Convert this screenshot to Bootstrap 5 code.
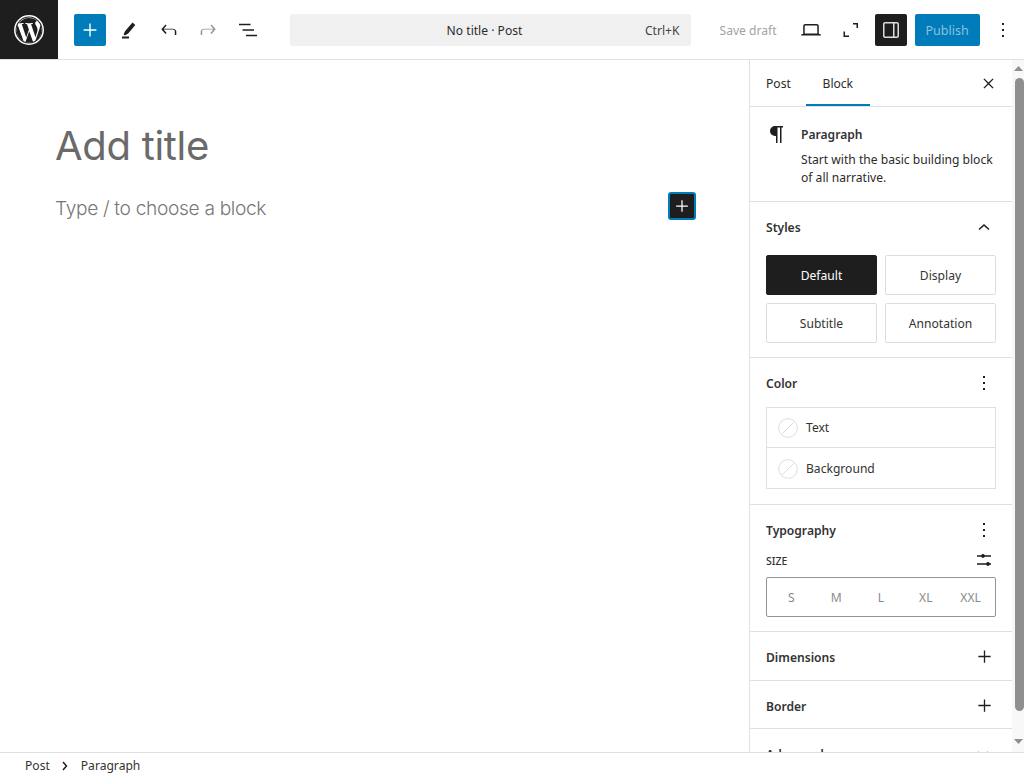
<!DOCTYPE html>
<html lang="en">
<head>
<meta charset="utf-8">
<title>New Post</title>
<link href="https://cdn.jsdelivr.net/npm/bootstrap@5.3.0/dist/css/bootstrap.min.css" rel="stylesheet">
<style>
html,body{height:773px;overflow:hidden}
body{font-family:"Noto Sans","Open Sans",sans-serif;font-size:12.1px;color:#2b2b2b;background:#fff}
.wp-app{height:773px}
.wp-top{height:60px;border-bottom:1px solid #e0e0e0;flex:none}
.wp-logo{width:58px;height:59px;background:#1e1e1e;flex:none}
.ic{width:32px;height:32px;flex:none;border-radius:2px}
.wp-add{background:#007cba;color:#fff;margin-left:16px}
.wp-tools{gap:7.5px;margin-left:7px}
.wp-cmd{width:401px;height:32px;background:#f0f0f0;border-radius:3px;margin-left:26px;padding:3px 11px 0 145px}
.wp-cmd .t{width:100px}
.wp-cmd .k{margin-left:auto;color:#444}
.wp-save{color:#a3a3a3;margin-left:29px;margin-right:18px;padding-top:4px}
.wp-dark{background:#1e1e1e}
.wp-pub{width:65px;height:32px;background:#007cba;color:#8fc0dd;border-radius:2px;margin-left:8px;font-size:12.5px;padding-top:4px}
.wp-dots{margin-left:7px;width:32px}
.wp-main{flex:1 1 0;min-height:0}
.wp-canvas{flex:1 1 0;padding:61px 55px 0;position:relative}
.wp-title{font-family:Inter,sans-serif;font-size:40px;font-weight:400;line-height:50px;color:#6a6a6a;letter-spacing:-.3px;margin:0}
.wp-ph{font-family:Inter,sans-serif;font-size:19.2px;font-weight:300;line-height:28px;color:#777;letter-spacing:-.35px;margin-top:23px}
.wp-inline{position:absolute;left:668px;top:132px;width:28px;height:28px;background:#1e1e1e;border:2px solid #007cba;border-radius:3px}
.wp-side{width:263px;border-left:1px solid #e0e0e0;overflow:hidden;flex:none}
.wp-tabs{height:47px;border-bottom:1px solid #e0e0e0;padding-left:1px;position:relative}
.wp-tab{padding:0 15px;height:46px;line-height:48px}
.wp-tab.on{padding:0 16px 0 16px;width:64px;box-shadow:inset 0 -2px 0 #007cba}
.wp-close{margin-left:auto;margin-right:13px}
.wp-sec{border-bottom:1px solid #e0e0e0;padding:0 16px}
.wp-head{font-weight:600;color:#333}
.wp-blockcard{height:95px;padding:18px 10px 0 16px}
.wp-blockcard svg{flex:none;margin-right:12px;margin-left:-1px;margin-top:-3px}
.wp-blockcard p{margin:0;line-height:18px}
.wp-blockcard .wp-head{margin-bottom:6px;line-height:20px}
.sty{height:156px;padding-top:11px}
.wp-sh{height:32px}
.sty .wp-sh{margin-bottom:11px;margin-top:-1px}
.wp-grid{display:grid;grid-template-columns:111px 111px;gap:8px;width:230px}
.wp-st{height:40px;border:1px solid #ddd;border-radius:2px;color:#333;padding-top:2px}
.wp-st.on{background:#1e1e1e;border-color:#1e1e1e;color:#fff}
.col-sec{height:147px;padding-top:10px}
.col-sec .wp-sh{margin-bottom:7px}
.wp-colbox{border:1px solid #e0e0e0;width:230px}
.wp-colrow{height:39px;padding:1px 0 0 11px;gap:8px;color:#333}
.wp-colrow span{padding-top:1px}
.wp-colrow+.wp-colrow{border-top:1px solid #e0e0e0;height:41px}
.ty-sec{height:127px;padding-top:10px}
.wp-label{font-size:10.5px;font-weight:500;color:#333;height:24px;margin-top:3px}
.wp-seg{width:230px;height:40px;border:1px solid #949494;border-radius:2px;color:#8a8a8a;padding:2px 2px 0;margin-top:3px}
.wp-seg span{flex:1 1 0;text-align:center}
.wp-coll{height:49px;padding:4px 17px 0 16px}
.wp-coll.sm{height:48px;padding-top:5px}
.wp-coll svg{margin-top:-4px}
.wp-scroll{width:12px;flex:none;background:#f8f8f8}
.wp-thumb{height:633px;width:9px;margin-left:3px;background:#8f8f8f;border-radius:5px;margin-top:7px}
.wp-up{height:11px;padding-left:1px}
.wp-down{flex:1 1 0}
.wp-foot{height:21px;border-top:1px solid #e0e0e0;flex:none;padding:5px 0 0 25px;color:#333;background:#fff;line-height:20px;gap:11.5px;position:relative}
</style>
</head>
<body>
<div class="wp-app d-flex flex-column">
  <header class="wp-top d-flex align-items-center">
    <div class="wp-logo d-flex align-items-center justify-content-center">
      <svg width="32" height="32" viewBox="0 0 32 32" fill="none"><circle cx="16" cy="16" r="14.200" fill="none" stroke="#fff" stroke-width="1.500"/><circle cx="16" cy="16" r="12.400" fill="#fff"/><path fill="#1e1e1e" d="M3.600 16c0 4.900 2.900 9.200 7 11.200L4.700 11c-.7 1.500-1.100 3.200-1.100 5zm20.800-.6c0-1.500-.6-2.600-1-3.400-.6-1-1.200-1.800-1.200-2.800 0-1.100.8-2.100 2-2.100h.2A12.400 12.400 0 0 0 6 9.200h.8c1.300 0 3.300-.2 3.300-.2.700 0 .8 1 .1 1.100 0 0-.7.100-1.400.1l4.400 13.200 2.700-8-1.900-5.200c-.7 0-1.300-.1-1.300-.1-.7 0-.6-1.100.1-1.100 0 0 2 .2 3.300.2 1.300 0 3.300-.2 3.300-.2.700 0 .8 1 .1 1.100 0 0-.7.100-1.400.1l4.400 13 1.200-4c.5-1.600.9-2.800.9-3.800zM16.200 17.300l-3.700 10.800a12.400 12.400 0 0 0 7.600-.2l-.1-.2zm10.700-7c.1.400.1.800.1 1.300 0 1.300-.2 2.700-.9 4.400l-3.800 10.900A12.400 12.400 0 0 0 26.900 10.300z"/></svg>
    </div>
    <div class="ic wp-add d-flex align-items-center justify-content-center">
      <svg width="22" height="22" viewBox="0 0 24 24" fill="#fff"><path d="M11.250 5h1.500v6.250H19v1.500h-6.250V19h-1.500v-6.250H5v-1.500h6.250z"/></svg>
    </div>
    <div class="wp-tools d-flex align-items-center">
      <div class="ic d-flex align-items-center justify-content-center"><svg width="24" height="24" viewBox="0 0 24 24" fill="#1e1e1e"><path d="M18.300 6.900 15.500 4.500 8.400 12.800c-.6.700-1.300 2.500-1.600 3.400l-.1.400 1.100.9.400-.2c.9-.4 2.700-1.300 3.200-2zM5 18.600h7v1.800H5z"/></svg></div>
      <div class="ic d-flex align-items-center justify-content-center"><svg width="24" height="24" viewBox="0 0 24 24" fill="#1e1e1e"><path d="M18.300 11.700c-.6-.6-1.400-.9-2.300-.9H6.700l2.900-3.300-1.100-1L4.300 11.200l4.200 4.700 1.100-1-2.900-3.300H16c.5 0 .9.200 1.300.5.300.4.500.8.500 1.300V17h1.500v-3.600c0-.6-.3-1.200-1-1.700z"/></svg></div>
      <div class="ic d-flex align-items-center justify-content-center"><svg width="24" height="24" viewBox="0 0 24 24" fill="#949494"><path d="M15.600 6.500l-1.100 1 2.900 3.300H8c-.9 0-1.700.3-2.300.9-.7.500-1 1.100-1 1.700V17h1.500v-3.600c0-.5.200-.9.500-1.300.4-.3.800-.5 1.300-.5h9.300l-2.900 3.300 1.100 1 4.200-4.700z"/></svg></div>
      <div class="ic d-flex align-items-center justify-content-center"><svg width="24" height="24" viewBox="0 0 24 24" fill="#1e1e1e"><path d="M3 5.800h11.500v1.500H3zM6.500 11.200H18v1.500H6.500zM10 16.700h11v1.500H10z"/></svg></div>
    </div>
    <div class="wp-cmd d-flex align-items-center">
      <span class="t text-center">No title · Post</span>
      <span class="k">Ctrl+K</span>
    </div>
    <span class="wp-save">Save draft</span>
    <div class="ic d-flex align-items-center justify-content-center"><svg width="24" height="24" viewBox="0 0 24 24" fill="#1e1e1e"><path d="M20.500 16h-.7V8c0-1.100-.9-2-2-2H6.200c-1.100 0-2 .9-2 2v8h-.7c-.8 0-1.500.7-1.500 1.500h20c0-.8-.7-1.500-1.500-1.500zM5.700 8c0-.3.200-.5.500-.5h11.600c.3 0 .5.200.5.500v7.600H5.700z"/></svg></div>
    <div class="ic ms-2 d-flex align-items-center justify-content-center"><svg width="24" height="24" viewBox="0 0 24 24" fill="#1e1e1e"><path d="M6 13.500H4.500V19H10v-1.500H6zM14 5v1.500h3.500V10H19V5z"/></svg></div>
    <div class="ic wp-dark ms-2 d-flex align-items-center justify-content-center"><svg width="24" height="24" viewBox="0 0 24 24" fill="#ddd"><path d="M18 4H6c-1.100 0-2 .9-2 2v12c0 1.100.9 2 2 2h12c1.100 0 2-.9 2-2V6c0-1.100-.9-2-2-2zM5.500 18V6c0-.3.200-.5.500-.5h8v13H6c-.3 0-.5-.2-.5-.5zm13 0c0 .3-.2.500-.5.500h-2.500v-13H18c.3 0 .5.200.5.500z"/></svg></div>
    <div class="wp-pub d-flex align-items-center justify-content-center">Publish</div>
    <div class="ic wp-dots d-flex align-items-center justify-content-center"><svg width="24" height="24" viewBox="0 0 24 24" fill="#1e1e1e"><path d="M13 19h-2v-2h2zm0-6h-2v-2h2zm0-6h-2V5h2z"/></svg></div>
  </header>

  <div class="wp-main d-flex">
    <main class="wp-canvas">
      <h1 class="wp-title">Add title</h1>
      <div class="wp-ph">Type / to choose a block</div>
      <div class="wp-inline d-flex align-items-center justify-content-center"><svg width="20" height="20" viewBox="0 0 24 24" fill="#fff"><path d="M11.250 5h1.500v6.250H19v1.500h-6.250V19h-1.500v-6.250H5v-1.500h6.250z"/></svg></div>
    </main>
    <aside class="wp-side">
      <div class="wp-tabs d-flex">
        <div class="wp-tab">Post</div>
        <div class="wp-tab on text-center">Block</div>
        <div class="wp-close d-flex align-items-center"><svg width="21" height="21" viewBox="0 0 24 24" fill="#1e1e1e"><path d="M13.060 12l4.720-4.720-1.060-1.060L12 10.940 7.280 6.220 6.220 7.280 10.940 12l-4.720 4.720 1.060 1.060L12 13.060l4.720 4.720 1.060-1.060z"/></svg></div>
      </div>
      <div class="wp-sec wp-blockcard d-flex">
        <svg width="24" height="24" viewBox="0 0 24 24" fill="#1e1e1e"><path d="M18 4H10a5 5 0 0 0 0 10h1v7h1.500V5.500H15V21h1.500V5.500H18z"/></svg>
        <div><div class="wp-head">Paragraph</div><p>Start with the basic building block of all narrative.</p></div>
      </div>
      <section class="wp-sec sty">
        <div class="wp-sh d-flex align-items-center justify-content-between"><span class="wp-head">Styles</span><svg width="24" height="24" viewBox="0 0 24 24" fill="#1e1e1e"><path d="M6.500 13 12 8l5.500 5-1 1.100L12 10l-4.500 4.100z"/></svg></div>
        <div class="wp-grid">
          <div class="wp-st on d-flex align-items-center justify-content-center">Default</div>
          <div class="wp-st d-flex align-items-center justify-content-center">Display</div>
          <div class="wp-st d-flex align-items-center justify-content-center">Subtitle</div>
          <div class="wp-st d-flex align-items-center justify-content-center">Annotation</div>
        </div>
      </section>
      <section class="wp-sec col-sec">
        <div class="wp-sh d-flex align-items-center justify-content-between"><span class="wp-head">Color</span><svg width="24" height="24" viewBox="0 0 24 24" fill="#1e1e1e"><path d="M13 19h-2v-2h2zm0-6h-2v-2h2zm0-6h-2V5h2z" transform="translate(0 -1)"/></svg></div>
        <div class="wp-colbox">
          <div class="wp-colrow d-flex align-items-center"><svg width="20" height="20" viewBox="0 0 20 20" fill="none" stroke="#ddd"><circle cx="10" cy="10" r="9.300"/><path d="M4 16 16 4"/></svg><span>Text</span></div>
          <div class="wp-colrow d-flex align-items-center"><svg width="20" height="20" viewBox="0 0 20 20" fill="none" stroke="#ddd"><circle cx="10" cy="10" r="9.300"/><path d="M4 16 16 4"/></svg><span>Background</span></div>
        </div>
      </section>
      <section class="wp-sec ty-sec">
        <div class="wp-sh d-flex align-items-center justify-content-between"><span class="wp-head">Typography</span><svg width="24" height="24" viewBox="0 0 24 24" fill="#1e1e1e"><path d="M13 19h-2v-2h2zm0-6h-2v-2h2zm0-6h-2V5h2z" transform="translate(0 -1)"/></svg></div>
        <div class="wp-label d-flex align-items-center justify-content-between"><span>SIZE</span><svg width="24" height="24" viewBox="0 0 24 24" fill="#1e1e1e"><path d="M5 5.250h4.200a2 2 0 0 1 3.600 0H19v1.500h-6.200a2 2 0 0 1-3.600 0H5zM5 13.250h9.200a2 2 0 0 1 3.600 0H19v1.500h-1.200a2 2 0 0 1-3.600 0H5z"/></svg></div>
        <div class="wp-seg d-flex align-items-center"><span>S</span><span>M</span><span>L</span><span>XL</span><span>XXL</span></div>
      </section>
      <section class="wp-sec wp-coll d-flex align-items-center justify-content-between"><span class="wp-head">Dimensions</span><svg width="21" height="21" viewBox="0 0 24 24" fill="#1e1e1e"><path d="M11.250 5h1.500v6.250H19v1.500h-6.250V19h-1.500v-6.250H5v-1.500h6.250z"/></svg></section>
      <section class="wp-sec wp-coll sm d-flex align-items-center justify-content-between"><span class="wp-head">Border</span><svg width="21" height="21" viewBox="0 0 24 24" fill="#1e1e1e"><path d="M11.250 5h1.500v6.250H19v1.500h-6.250V19h-1.500v-6.250H5v-1.500h6.250z"/></svg></section>
      <section class="wp-sec wp-coll d-flex align-items-center justify-content-between"><span class="wp-head">Advanced</span><svg width="24" height="24" viewBox="0 0 24 24" fill="#1e1e1e"><path d="M17.500 11.600 16.400 10.500 12 14.500 7.600 10.500 6.500 11.600 12 16.500z"/></svg></section>
    </aside>
    <div class="wp-scroll d-flex flex-column">
      <div class="wp-up d-flex justify-content-center align-items-end"><svg width="9" height="5" viewBox="0 0 9 5" fill="#8f8f8f"><path d="M4.500 0 9 5H0z"/></svg></div>
      <div class="wp-thumb"></div>
      <div class="wp-down d-flex justify-content-center align-items-end pb-2"><svg width="9" height="5" viewBox="0 0 9 5" fill="#8f8f8f"><path d="M4.500 5 9 0H0z"/></svg></div>
    </div>
  </div>

  <footer class="wp-foot d-flex align-items-center">
    <span>Post</span>
    <svg width="8" height="10" viewBox="0 0 8 10" fill="none" stroke="#1e1e1e" stroke-width="1.500"><path d="M2 1l3.500 4L2 9"/></svg>
    <span>Paragraph</span>
  </footer>
</div>
</body>
</html>
